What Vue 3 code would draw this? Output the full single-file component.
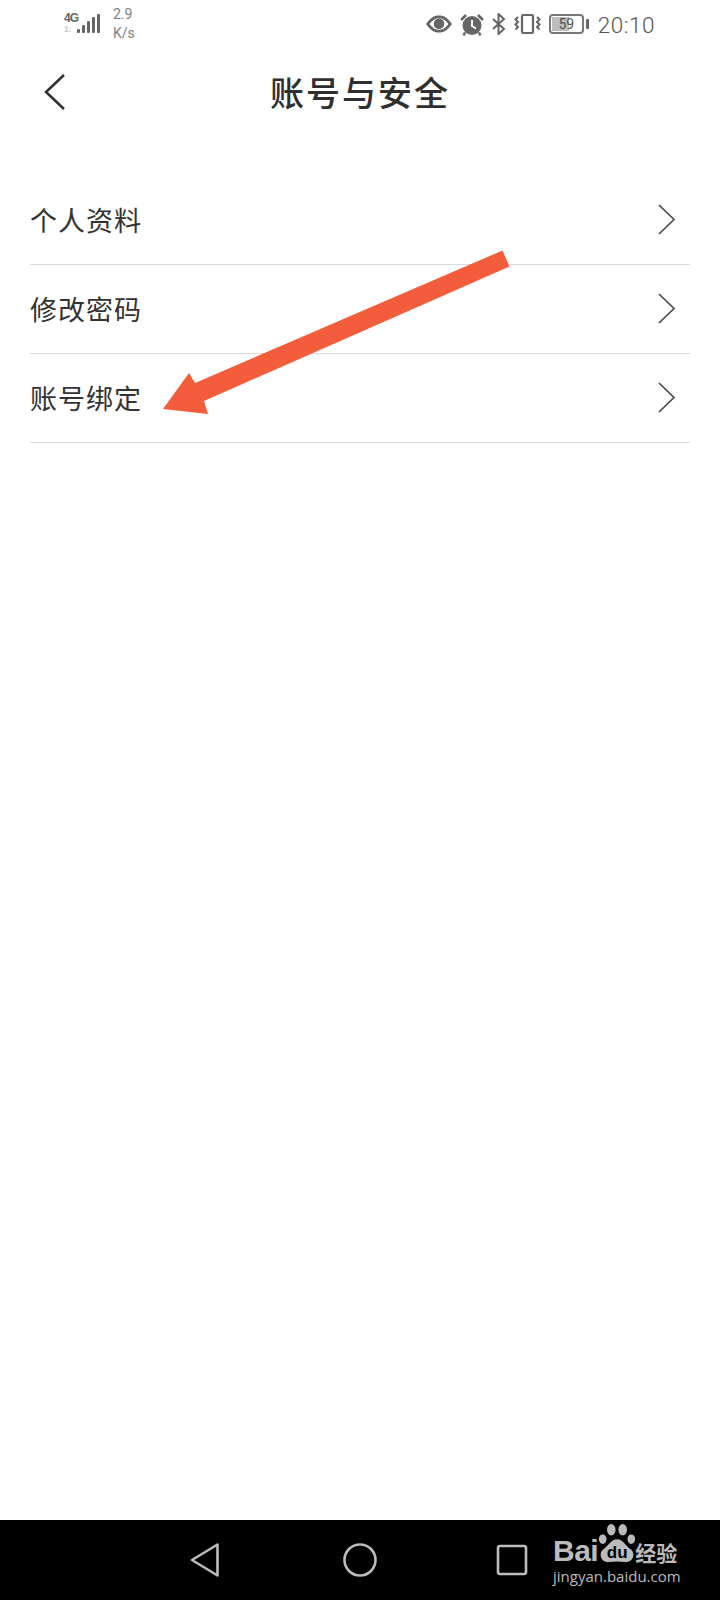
<script setup>
const rows = ['个人资料', '修改密码', '账号绑定']
</script>

<template>
  <div class="page">
    <div class="status">
      <div class="status-left">
        <div class="net">
          <div class="net-labels">
            <span class="n4g">4G</span>
            <span class="n1">1↓</span>
          </div>
          <svg class="bars" width="23" height="24" viewBox="0 0 23 24" fill="#666">
            <rect x="0" y="17" width="3" height="4" rx="1" />
            <rect x="5" y="13" width="3" height="8" rx="1" />
            <rect x="10" y="9" width="3" height="12" rx="1" />
            <rect x="15" y="5" width="3" height="16" rx="1" />
            <rect x="20" y="2" width="3" height="19" rx="1" />
          </svg>
        </div>
        <div class="speed"><span>2.9</span><span>K/s</span></div>
      </div>
      <div class="status-right">
        <svg width="28" height="20" viewBox="0 0 28 20">
          <path d="M1 10C5 4 9 1.500 14 1.500S23 4 27 10C23 16 19 18.500 14 18.500S5 16 1 10Z" fill="#666" />
          <path d="M4.500 10C7.500 6 10.500 4.200 14 4.200S20.500 6 23.500 10C20.500 14 17.500 15.800 14 15.800S7.500 14 4.500 10Z" fill="#fff" />
          <circle cx="14" cy="9.800" r="5.300" fill="#666" />
        </svg>
        <svg class="alarm" width="26" height="23" viewBox="0 0 26 23">
          <circle cx="13" cy="12.500" r="9.500" fill="#666" />
          <path d="M2 7 7 2M24 7 19 2" stroke="#666" stroke-width="2.600" fill="none" />
          <path d="M6 19.500 4.500 22.500M20 19.500 21.500 22.500" stroke="#666" stroke-width="2.400" fill="none" />
          <path d="M13 7v6l4 2.500" stroke="#fff" stroke-width="2" fill="none" />
        </svg>
        <svg class="bt" width="15" height="22" viewBox="0 0 15 22" fill="none" stroke="#666" stroke-width="2">
          <path d="M2 6 13 16 7.500 21V1L13 6 2 16" />
        </svg>
        <svg class="vib" width="27" height="20" viewBox="0 0 27 20" fill="none" stroke="#666">
          <rect x="8" y="1" width="11" height="18" rx="1.500" stroke-width="2.200" />
          <path d="M4 3 1.500 5.500 4 8 1.500 10.500 4 13 1.500 15.500M23 3 25.500 5.500 23 8 25.500 10.500 23 13 25.500 15.500" stroke-width="2" />
        </svg>
        <div class="battery">
          <div class="cell"><div class="fill"></div><span class="pct">59</span></div>
          <div class="cap"></div>
        </div>
        <span class="time">20:10</span>
      </div>
    </div>

    <header class="head">
      <svg class="back" width="24" height="38" viewBox="0 0 24 38" fill="none" stroke="#333" stroke-width="2.600">
        <path d="M21 2 3 19 21 36" />
      </svg>
      <h1 class="title">账号与安全</h1>
    </header>

    <ul class="list">
      <li v-for="row in rows" :key="row" class="row">
        <span class="label">{{ row }}</span>
        <svg class="chev" width="18" height="31" viewBox="0 0 18 31" fill="none" stroke="#444" stroke-width="1.600">
          <path d="M1 1 16 15.500 1 30" />
        </svg>
      </li>
    </ul>

    <main class="blank"></main>

    <nav class="nav">
      <svg width="30" height="36" viewBox="0 0 30 36" fill="none" stroke="#bbb" stroke-width="2.600" stroke-linejoin="round">
        <path d="M27.500 2.500V33.500L2 18Z" />
      </svg>
      <svg class="nav-home" width="36" height="36" viewBox="0 0 36 36" fill="none" stroke="#bbb" stroke-width="2.600">
        <circle cx="18" cy="18" r="15.500" />
      </svg>
      <svg class="nav-recent" width="32" height="32" viewBox="0 0 32 32" fill="none" stroke="#bbb" stroke-width="2.600">
        <rect x="2" y="2" width="28" height="28" rx="2" />
      </svg>
    </nav>

    <svg class="arrow" width="720" height="460" viewBox="0 0 720 460">
      <path d="M502.500 250.500 509.500 266.500 204 401 208 414 163 409 189 373 195 383Z" fill="#f45d3c" />
    </svg>

    <div class="mark">
      <div class="mark-top">
        <span class="bai">Bai</span>
        <div class="paw">
          <svg width="40" height="42" viewBox="0 0 42 44" fill="#bbb">
            <ellipse cx="6" cy="17" rx="4" ry="5" />
            <ellipse cx="15" cy="7" rx="4.500" ry="6" />
            <ellipse cx="27" cy="7" rx="4.500" ry="6" />
            <ellipse cx="36" cy="17" rx="4" ry="5" />
            <path d="M21 17C27 17 30 24 36 28 41 33 37 42 29 41 24 40 18 40 13 41 5 42 1 33 6 28 12 24 15 17 21 17Z" />
          </svg>
          <span class="du">du</span>
        </div>
        <span class="jy">经验</span>
      </div>
      <div class="mark-url">jingyan.baidu.com</div>
    </div>
  </div>
</template>

<style scoped>
.page {
  position: relative;
  width: 720px;
  height: 1600px;
  display: flex;
  flex-direction: column;
  background: #fff;
  overflow: hidden;
  font-family: "Noto Sans CJK SC", "Noto Sans", sans-serif;
}
.status {
  height: 48px;
  flex: none;
  display: flex;
  align-items: center;
  justify-content: space-between;
  padding: 0 65px 0 64px;
}
.status-left {
  display: flex;
  align-items: center;
  gap: 13px;
}
.net {
  display: flex;
  align-items: center;
}
.net-labels {
  display: flex;
  flex-direction: column;
  width: 13px;
  font-family: "Liberation Sans Narrow", "Liberation Sans", sans-serif;
  font-weight: 700;
  line-height: 11px;
}
.n4g {
  font-size: 12px;
  letter-spacing: -1px;
  color: #666;
}
.n1 {
  font-size: 9px;
  letter-spacing: -1px;
  color: #ccc;
}
.speed {
  display: flex;
  flex-direction: column;
  font-family: Roboto, sans-serif;
  font-size: 14px;
  line-height: 19px;
  color: #808080;
}
.status-right {
  display: flex;
  align-items: center;
}
.alarm {
  margin-left: 6px;
}
.bt {
  margin-left: 6px;
}
.vib {
  margin-left: 8px;
}
.battery {
  display: flex;
  align-items: center;
  gap: 2px;
  margin-left: 8px;
}
.cell {
  position: relative;
  width: 35px;
  height: 20px;
  box-sizing: border-box;
  border: 2px solid #777;
  border-radius: 4px;
  padding: 1px;
}
.fill {
  width: 59%;
  height: 100%;
  background: #bdbdbd;
}
.pct {
  position: absolute;
  inset: 0;
  text-align: center;
  font-family: Roboto, sans-serif;
  font-size: 14px;
  line-height: 16px;
  color: #555;
}
.cap {
  width: 3px;
  height: 10px;
  background: #666;
  border-radius: 1px;
}
.time {
  margin: 2px 0 0 9px;
  font-family: Roboto, sans-serif;
  font-size: 22.500px;
  font-weight: 300;
  letter-spacing: 0.5px;
  line-height: 26px;
  color: #555;
}
.head {
  position: relative;
  height: 90px;
  flex: none;
  display: flex;
  align-items: center;
  justify-content: center;
}
.back {
  position: absolute;
  left: 43px;
  top: 25px;
}
.title {
  margin: -3px 0 0;
  font-size: 34px;
  font-weight: 500;
  line-height: 50px;
  letter-spacing: 2px;
  color: #2f2f2f;
}
.list {
  list-style: none;
  margin: 38px 0 0;
  padding: 0 30px;
}
.row {
  height: 88px;
  border-bottom: 1px solid #d9d9d9;
  display: flex;
  align-items: center;
  justify-content: space-between;
}
.label {
  margin-top: 0;
  font-size: 27px;
  line-height: 40px;
  letter-spacing: 1px;
  color: #333;
}
.chev {
  margin: 0 14px 2px 0;
}
.blank {
  flex: 1;
}
.nav {
  height: 80px;
  flex: none;
  background: #000;
  display: flex;
  align-items: center;
  padding: 0 0 0 190px;
  box-sizing: border-box;
}
.nav-home {
  margin-left: 122px;
}
.nav-recent {
  margin-left: 118px;
}
.arrow {
  position: absolute;
  left: 0;
  top: 0;
  pointer-events: none;
}
.mark {
  position: absolute;
  left: 553px;
  top: 1521px;
  width: 135px;
  color: #bbb;
  font-family: "Liberation Sans", sans-serif;
}
.mark-top {
  height: 46px;
  display: flex;
  align-items: flex-end;
}
.bai {
  font-size: 30px;
  font-weight: 700;
  line-height: 32px;
  letter-spacing: -0.5px;
}
.paw {
  position: relative;
  width: 38px;
  height: 44px;
  margin-left: -1px;
}
.du {
  position: absolute;
  left: 6px;
  top: 21px;
  width: 28px;
  text-align: center;
  font-size: 17px;
  font-weight: 700;
  line-height: 18px;
  color: #000;
}
.jy {
  margin-left: 0;
  font-family: "Noto Sans CJK SC", sans-serif;
  font-size: 21px;
  line-height: 30px;
  font-weight: 700;
}
.mark-url {
  font-family: "Open Sans", "Noto Sans", sans-serif;
  font-size: 15px;
  line-height: 19px;
  white-space: nowrap;
}
</style>
